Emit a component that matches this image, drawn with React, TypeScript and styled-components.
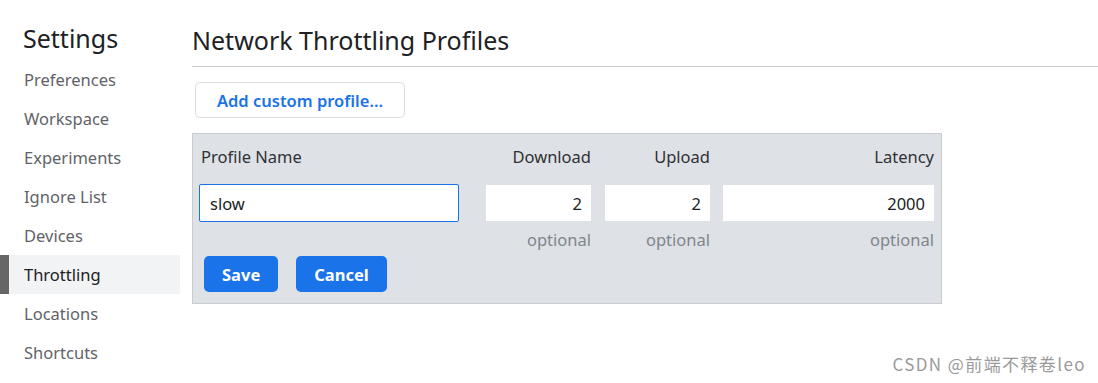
import React from 'react'
import styled, { createGlobalStyle } from 'styled-components'

const GlobalStyle = createGlobalStyle`
	html, body {
		margin: 0;
		padding: 0;
		background: #fff;
		font-family: 'Noto Sans', 'Open Sans', sans-serif;
	}
`

const NAV_ITEMS = [
	'Preferences',
	'Workspace',
	'Experiments',
	'Ignore List',
	'Devices',
	'Throttling',
	'Locations',
	'Shortcuts',
]

export default function App() {
	return (
		<>
			<GlobalStyle />
			<Page>
				<Sidebar>
					<SidebarTitle>Settings</SidebarTitle>
					<NavList>
						{NAV_ITEMS.map(item => (
							<NavItem key={item} selected={item === 'Throttling'}>
								{item}
							</NavItem>
						))}
					</NavList>
				</Sidebar>
				<Main>
					<Header>
						<Title>Network Throttling Profiles</Title>
					</Header>
					<AddButton>Add custom profile...</AddButton>
					<Editor>
						<Grid>
							<Label>Profile Name</Label>
							<Label align="right">Download</Label>
							<Label align="right">Upload</Label>
							<Label align="right">Latency</Label>

							<NameInput defaultValue="slow" />
							<NumberInput defaultValue="2" />
							<NumberInput defaultValue="2" />
							<NumberInput defaultValue="2000" />

							<span />
							<Hint>optional</Hint>
							<Hint>optional</Hint>
							<Hint>optional</Hint>
						</Grid>
						<Actions>
							<PrimaryButton>Save</PrimaryButton>
							<PrimaryButton>Cancel</PrimaryButton>
						</Actions>
					</Editor>
				</Main>
			</Page>
			<Watermark>CSDN @前端不释卷leo</Watermark>
		</>
	)
}

const Page = styled.div`
	display: flex;
	width: 1098px;
	height: 383px;
	overflow: hidden;
`

const Sidebar = styled.div`
	width: 180px;
	flex-shrink: 0;
	padding-top: 20px;
`

const SidebarTitle = styled.div`
	font-size: 25px;
	color: #202124;
	padding-left: 23px;
	height: 40px;
	line-height: 36px;
`

const NavList = styled.div`
	display: flex;
	flex-direction: column;
`

const NavItem = styled.div<{ selected?: boolean }>`
	height: 39px;
	line-height: 39px;
	font-size: 16.5px;
	padding-left: 24px;
	color: ${({ selected }) => (selected ? '#202124' : '#5f6368')};
	background: ${({ selected }) => (selected ? '#f1f3f4' : 'transparent')};
	box-shadow: ${({ selected }) => (selected ? 'inset 9px 0 0 #666' : 'none')};
`

const Main = styled.div`
	flex: 1;
	padding-left: 12px;
	padding-top: 22px;
`

const Header = styled.div`
	border-bottom: 1px solid #cbcdd1;
	height: 44px;
`

const Title = styled.div`
	font-size: 25px;
	color: #202124;
	line-height: 36px;
`

const AddButton = styled.button`
	margin: 15px 0 0 3px;
	width: 210px;
	height: 36px;
	border: 1px solid #dadce0;
	border-radius: 5px;
	background: #fff;
	color: #1a73e8;
	font-family: inherit;
	font-size: 16.5px;
	font-weight: 600;
	padding: 0;
`

const Editor = styled.div`
	margin-top: 15px;
	width: 750px;
	height: 171px;
	box-sizing: border-box;
	background: #dee1e6;
	border: 1px solid #c9cbcf;
	padding: 8px 8px 0 6px;
`

const Grid = styled.div`
	display: grid;
	grid-template-columns: 273px 105px 105px 210px;
	column-gap: 14px;
	& > :nth-child(4n + 1) {
		margin-right: 13px;
	}
	& > :nth-child(4n + 4) {
		margin-left: -1px;
	}
`

const Label = styled.div<{ align?: 'left' | 'right' }>`
	text-align: ${({ align }) => align ?? 'left'};
	padding-left: ${({ align }) => (align === 'right' ? 0 : '2px')};
	font-size: 16.5px;
	color: #303134;
	height: 42px;
	line-height: 30px;
`

const NameInput = styled.input`
	box-sizing: border-box;
	height: 38px;
	border: 1.5px solid #1a73e8;
	border-radius: 2px;
	background: #fff;
	font-family: inherit;
	font-size: 16.5px;
	color: #202124;
	padding: 0 10px;
	outline: none;
`

const NumberInput = styled.input`
	box-sizing: border-box;
	height: 36px;
	margin-top: 1px;
	border: none;
	background: #fff;
	font-family: inherit;
	font-size: 16.5px;
	color: #202124;
	text-align: right;
	padding: 0 9px 0 6px;
	outline: none;
`

const Hint = styled.div`
	text-align: right;
	font-size: 16.5px;
	color: #80868b;
	height: 34px;
	line-height: 36px;
`

const Actions = styled.div`
	display: flex;
	gap: 18px;
	padding-left: 5px;
`

const PrimaryButton = styled.button`
	height: 36px;
	padding: 0 18px;
	border: none;
	border-radius: 5px;
	background: #1a73e8;
	color: #fff;
	font-family: inherit;
	font-size: 16.5px;
	font-weight: 700;
`

const Watermark = styled.div`
	position: absolute;
	right: 12px;
	top: 351px;
	font-family: 'Noto Sans CJK SC', sans-serif;
	font-size: 17px;
	letter-spacing: 1.4px;
	color: #9a9a9a;
`
